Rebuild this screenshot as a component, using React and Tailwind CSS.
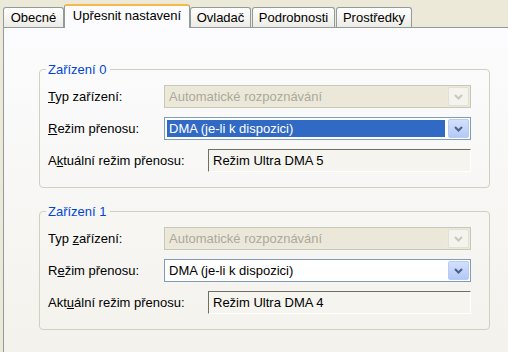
import React from "react";

const tabs = [
  { label: "Obecné", w: "w-[61px]", ml: "ml-0" },
  { label: "Upřesnit nastavení", w: "w-[126px]", ml: "ml-0", active: true },
  { label: "Ovladač", w: "w-[61px]", ml: "ml-0" },
  { label: "Podrobnosti", w: "w-[83px]", ml: "ml-[1px]" },
  { label: "Prostředky", w: "w-[76px]", ml: "ml-[1px]" },
];

function Chevron({ disabled }) {
  return (
    <svg width="9" height="6" viewBox="0 0 9 6">
      <path
        d="M1 1 L4.5 4.5 L8 1"
        fill="none"
        stroke={disabled ? "#C9C7BA" : "#4D6185"}
        strokeWidth="2"
      />
    </svg>
  );
}

function Combo({ value, disabled, selected }) {
  return (
    <div
      className={
        "flex w-[307px] h-[23px] border p-px " +
        (disabled ? "border-[#C9C7BA] bg-[#ECE9D8]" : "border-[#7F9DB9] bg-white")
      }
    >
      <div className="flex-1 p-px">
        <div
          className={
            "h-full flex items-center pl-[2px] " +
            (disabled
              ? "text-[#ACA899] bg-[#EBE8DA]"
              : selected
              ? "bg-[#316AC5] text-white"
              : "text-black")
          }
        >
          {value}
        </div>
      </div>
      <div
        className={
          "ml-[2px] w-[21px] rounded-[2px] border flex items-center justify-center " +
          (disabled
            ? "border-[#E3E1D6] bg-[#F4F3EE]"
            : "border-[#B8CCF3] bg-linear-to-b from-[#D3E0FD] to-[#B4C9F7]")
        }
      >
        <Chevron disabled={disabled} />
      </div>
    </div>
  );
}

function ReadBox({ value }) {
  return (
    <div className="w-[263px] h-[23px] flex items-center pl-[4px] bg-[#F5F4EF] border border-t-[#716F64] border-l-[#716F64] border-r-white border-b-white">
      {value}
    </div>
  );
}

function DeviceGroup({ title, keys, mode, current }) {
  return (
    <fieldset className="w-[451px] border border-[#D0D0BF] rounded-[4px] pl-[8px] pt-[8px] pb-[15px]">
      <legend className="ml-[-2px] pl-[2px] pr-[3px] leading-[15px] text-[#0046D5]">
        {title}
      </legend>
      <div className="flex flex-col gap-[9px]">
        <div className="flex items-center">
          <div className="w-[116px]">{keys[0]}</div>
          <Combo value="Automatické rozpoznávání" disabled />
        </div>
        <div className="flex items-center">
          <div className="w-[116px]">{keys[1]}</div>
          <Combo value={mode} selected={title === "Zařízení 0"} />
        </div>
        <div className="flex items-center">
          <div className="w-[160px]">{keys[2]}</div>
          <ReadBox value={current} />
        </div>
      </div>
    </fieldset>
  );
}

export default function App() {
  return (
    <div className="w-[508px] h-[352px] overflow-hidden bg-[#ECE9D8] flex flex-col pt-[4px] font-['Liberation_Sans',Arial,sans-serif] text-[13px] text-black">
      <div className="relative z-10 flex items-end h-[23px] pl-[3px]">
        {tabs.map((t) =>
          t.active ? (
            <div
              key={t.label}
              className={`${t.w} h-[24px] -mb-px rounded-t-[3px] border border-b-0 border-[#919B9C] border-t-2 border-t-[#F5B94A] bg-[#FCFCFE] flex items-center justify-center pb-[3px]`}
            >
              {t.label}
            </div>
          ) : (
            <div
              key={t.label}
              className={`${t.w} ${t.ml} h-[20px] rounded-t-[3px] border border-b-0 border-[#919B9C] bg-linear-to-b from-white to-[#ECEBE5] flex items-center justify-center`}
            >
              {t.label}
            </div>
          )
        )}
      </div>
      <div className="relative flex-1 ml-[3px] border-l border-t border-[#919B9C] bg-linear-to-b from-[#FCFCFE] to-[#F3F2EC] pl-[35px] pt-[34px]">
        <DeviceGroup
          title="Zařízení 0"
          keys={[
            <>
              <span className="underline">T</span>yp zařízení:
            </>,
            <>
              <span className="underline">R</span>ežim přenosu:
            </>,
            <>
              A<span className="underline">k</span>tuální režim přenosu:
            </>,
          ]}
          mode="DMA (je-li k dispozici)"
          current="Režim Ultra DMA 5"
        />
        <div className="h-[16px]" />
        <DeviceGroup
          title="Zařízení 1"
          keys={[
            <>
              Typ <span className="underline">z</span>ařízení:
            </>,
            <>
              R<span className="underline">e</span>žim přenosu:
            </>,
            <>
              Akt<span className="underline">u</span>ální režim přenosu:
            </>,
          ]}
          mode="DMA (je-li k dispozici)"
          current="Režim Ultra DMA 4"
        />
      </div>
    </div>
  );
}
